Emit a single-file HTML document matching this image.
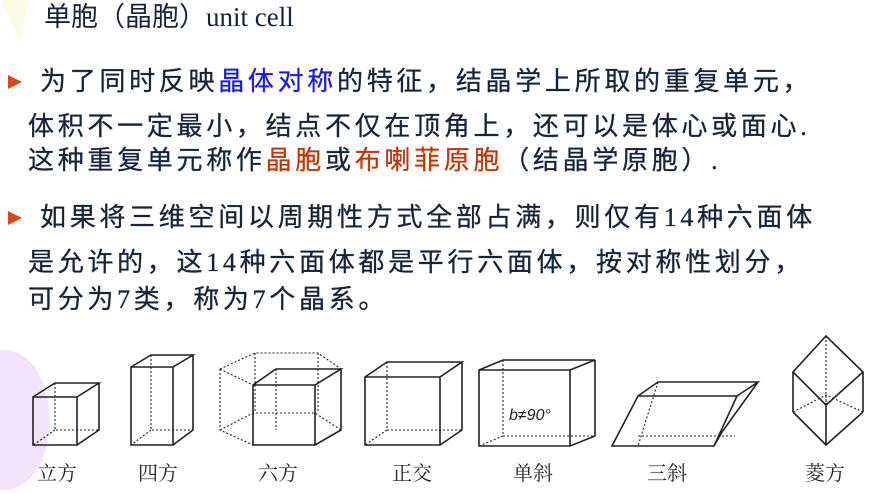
<!DOCTYPE html>
<html><head><meta charset="utf-8"><style>
body{margin:0;width:880px;height:494px;overflow:hidden;background:#fff;position:relative;font-family:"Liberation Serif","Noto Sans CJK SC",sans-serif;color:#17253a}
.l{position:absolute;font-size:26px;letter-spacing:3.7px;white-space:nowrap;line-height:30px;-webkit-text-stroke:0.3px #17253a}
.b{color:#1a1aee;-webkit-text-stroke:0.3px #1a1aee}.r{color:#c0380a;-webkit-text-stroke:0.3px #c0380a}
.ar{position:absolute;width:0;height:0;border-left:14px solid #d8481a;border-top:7px solid transparent;border-bottom:7px solid transparent}
.lab{position:absolute;top:457px;font-size:20px;font-family:"Noto Serif CJK SC",serif;color:#222}
</style></head><body>
<svg style="position:absolute;left:0;top:0" width="880" height="494">
<ellipse cx="5" cy="420" rx="45" ry="70" fill="#f1e4fa"/>
<path d="M0 0 L30 0 L20 40 Z" fill="#fbfbe6"/>
</svg>
<div style="position:absolute;left:44px;top:0px;font-size:27px;line-height:34px">单胞（晶胞）unit cell</div>
<div class="ar" style="left:8px;top:75px"></div>
<div class="l" style="left:40px;top:67px">为了同时反映<span class="b">晶体对称</span>的特征，结晶学上所取的重复单元，</div>
<div class="l" style="left:28px;top:112px">体积不一定最小，结点不仅在顶角上，还可以是体心或面心.</div>
<div class="l" style="left:28px;top:146px">这种重复单元称作<span class="r">晶胞</span>或<span class="r">布喇菲原胞</span>（结晶学原胞）.</div>
<div class="ar" style="left:8px;top:211px"></div>
<div class="l" style="left:40px;top:203px">如果将三维空间以周期性方式全部占满，则仅有14种六面体</div>
<div class="l" style="left:28px;top:248px">是允许的，这14种六面体都是平行六面体，按对称性划分，</div>
<div class="l" style="left:28px;top:285px">可分为7类，称为7个晶系。</div>
<svg style="position:absolute;left:0;top:0" width="880" height="494" fill="none" stroke="#222" stroke-width="1.6">
<g stroke-dasharray="2 2" stroke-width="1.1">
<path d="M55 383V430H99M55 430L33 445"/>
<path d="M151 355V430H193M151 430L131 445"/>
<path d="M220 369L255 353H318L341 369M220 369L253 385M220 369V430L253 445M220 430L253 413H315L341 430M255 353V413M318 353V413M276 369V430"/>
<path d="M387 362V430H462M387 430L365 445"/>
<path d="M503 360V436H595M503 436L479 446"/>
<path d="M658 382L638 446M638 436H735"/>
<path d="M826 336V405M793 412L826 395L863 412M826 395V405"/>
</g>
<path d="M33 397H77V445H33ZM33 397L55 383H99L77 397M99 383V430L77 445"/>
<path d="M131 367H173V445H131ZM131 367L151 355H193L173 367M193 355V430L173 445"/>
<path d="M253 385H315V445H253ZM253 385L276 369H341L315 385M341 369V430L315 445"/>
<path d="M365 377H440V445H365ZM365 377L387 362H462L440 377M462 362V430L440 445"/>
<path d="M479 370H570V446H479ZM479 370L503 360H595L570 370M595 360V436L570 446"/>
<path d="M612 446H714L737 396H638ZM638 396L658 382H758L737 396M758 382L722 432L714 446"/>
<path d="M826 336L793 372L826 405L863 372ZM793 372V412M863 372V412M826 405V445M793 412L826 445L863 412"/>
</svg>
<div style="position:absolute;left:509px;top:407px;font-size:16px;font-style:italic;font-family:'Liberation Sans',sans-serif;color:#222">b≠90°</div>
<div class="lab" style="left:37px">立方</div>
<div class="lab" style="left:138px">四方</div>
<div class="lab" style="left:258px">六方</div>
<div class="lab" style="left:392px">正交</div>
<div class="lab" style="left:513px">单斜</div>
<div class="lab" style="left:647px">三斜</div>
<div class="lab" style="left:805px">菱方</div>
</body></html>
